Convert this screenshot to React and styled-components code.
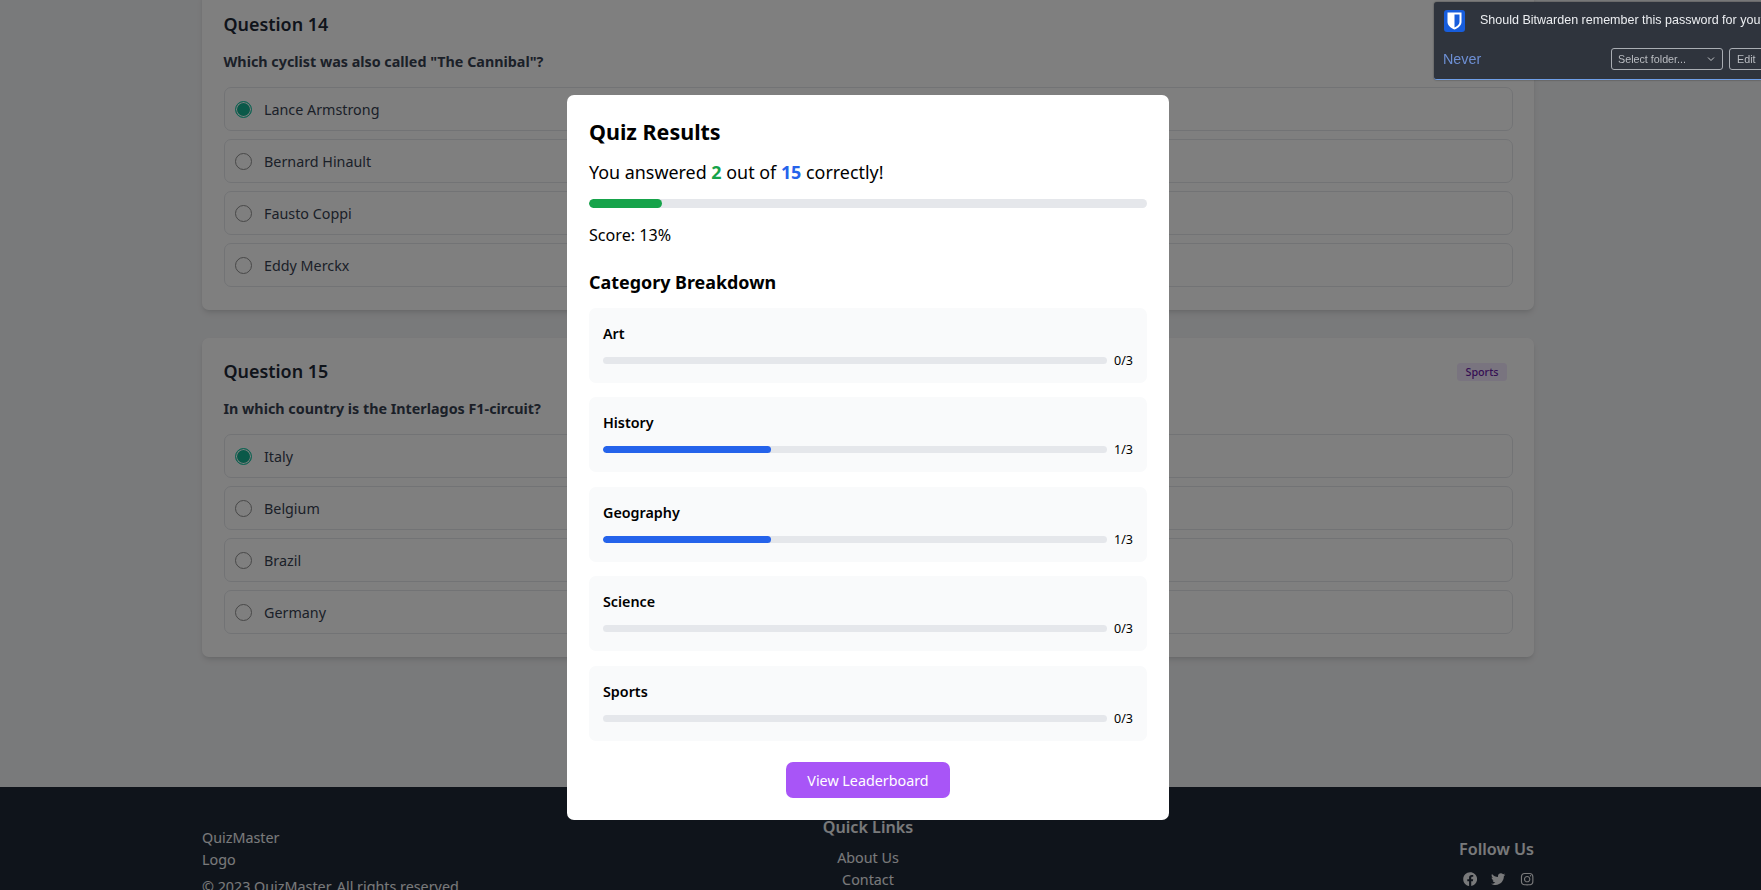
import React from 'react'
import styled, { createGlobalStyle } from 'styled-components'
import { FaFacebook, FaTwitter, FaInstagram } from 'react-icons/fa'

const Global = createGlobalStyle`
  html, body {
    margin: 0;
    height: 890px;
    overflow: hidden;
    background: #f3f4f6;
    font-family: "Noto Sans", sans-serif;
  }
  * { box-sizing: border-box; }
`

const questions = [
  {
    title: 'Question 14',
    text: 'Which cyclist was also called "The Cannibal"?',
    options: ['Lance Armstrong', 'Bernard Hinault', 'Fausto Coppi', 'Eddy Merckx'],
  },
  {
    title: 'Question 15',
    text: 'In which country is the Interlagos F1-circuit?',
    options: ['Italy', 'Belgium', 'Brazil', 'Germany'],
  },
]

const categories = [
  { name: 'Art', score: 0 },
  { name: 'History', score: 1 },
  { name: 'Geography', score: 1 },
  { name: 'Science', score: 0 },
  { name: 'Sports', score: 0 },
]

const Page = styled.div`
  height: 890px;
  overflow: hidden;
  display: flex;
  flex-direction: column;
`

const Main = styled.main`
  height: 796px;
  margin-top: -9px;
  padding: 0 227px 0 202px;
  display: flex;
  flex-direction: column;
  gap: 28px;
  flex-shrink: 0;
`

const Card = styled.section`
  height: 319px;
  background: #fff;
  border-radius: 7px;
  padding: 21.5px 21px 21.5px 21.5px;
  box-shadow: 0 4px 6px -1px rgba(0, 0, 0, 0.1), 0 2px 4px -2px rgba(0, 0, 0, 0.1);
`

const CardHead = styled.div`
  display: flex;
  justify-content: space-between;
  align-items: center;
  height: 23px;
  margin-bottom: 16.5px;
`

const QuestionTitle = styled.h2`
  margin: 0;
  font-size: 17.9px;
  line-height: 23px;
  font-weight: 600;
  color: #1f2937;
`

const Badge = styled.span`
  margin: 1px 6px 0 0;
  height: 18px;
  padding: 0 8.5px;
  border-radius: 3.5px;
  background: #f3e8ff;
  color: #6b21a8;
  font-size: 10.74px;
  line-height: 18px;
  font-weight: 500;
`

const QuestionText = styled.p`
  margin: 0 0 15px;
  font-size: 14.32px;
  line-height: 20px;
  font-weight: 700;
  color: #374151;
`

const Options = styled.div`
  display: flex;
  flex-direction: column;
  gap: 8px;
`

const Option = styled.div`
  height: 44px;
  display: flex;
  align-items: center;
  gap: 12px;
  padding: 0 10.5px;
  border: 1px solid #e5e7eb;
  border-radius: 7px;
  font-size: 14.32px;
  color: #374151;
`

const Radio = styled.span`
  width: 17px;
  height: 17px;
  border-radius: 50%;
  border: 1px solid ${p => (p.$on ? '#1cc9a8' : '#8f8f8f')};
  background: ${p => (p.$on ? '#16b292' : '#fff')};
  box-shadow: ${p => (p.$on ? 'inset 0 0 0 1px #fff' : 'none')};
  flex-shrink: 0;
`

const Footer = styled.footer`
  flex: 1;
  background: #1f2937;
  padding: 0 227px 0 202px;
  display: grid;
  grid-template-columns: 1fr auto 1fr;
  font-size: 14.32px;
  line-height: 22px;
  color: #f3f4f6;
`

const FooterCol = styled.div`
  padding-top: ${p => p.$top}px;
  display: flex;
  flex-direction: column;
  align-items: ${p => p.$align};
  text-align: ${p => p.$text || 'left'};
`

const Copyright = styled.div`
  margin-top: 5px;
  white-space: nowrap;
`

const FooterHead = styled.div`
  font-size: 16.11px;
  font-weight: 600;
  margin-bottom: 9px;
`

const Socials = styled.div`
  display: flex;
  gap: 14px;
  font-size: 14.32px;
  height: 16px;
  align-items: center;
  padding-top: 4px;
`

const Overlay = styled.div`
  position: fixed;
  inset: 0;
  background: rgba(0, 0, 0, 0.5);
  display: flex;
  justify-content: center;
  align-items: flex-start;
  padding: 95px 25px 0 0;
`

const Modal = styled.div`
  width: 602px;
  height: 725px;
  background: #fff;
  border-radius: 7px;
  padding: 22px;
  color: #000;
`

const ModalTitle = styled.h2`
  margin: 0 0 12px;
  font-size: 21.48px;
  line-height: 30px;
  font-weight: 700;
`

const Summary = styled.p`
  margin: 0 0 14px;
  font-size: 17.9px;
  line-height: 26px;
`

const Num = styled.strong`
  font-weight: 700;
  color: ${p => p.$color};
`

const Track = styled.div`
  background: #e5e7eb;
  border-radius: 999px;
  overflow: hidden;
  height: ${p => p.$h}px;
  flex: 1;
`

const Fill = styled.div`
  height: 100%;
  border-radius: 999px;
  background: ${p => p.$color};
`

const Score = styled.p`
  margin: 16px 0 0;
  font-size: 16.11px;
  line-height: 22px;
`

const BreakdownTitle = styled.h3`
  margin: 22.7px 0 13.3px;
  font-size: 17.9px;
  line-height: 26px;
  font-weight: 700;
`

const Tiles = styled.div`
  display: flex;
  flex-direction: column;
  gap: 14.4px;
`

const Tile = styled.div`
  height: 75px;
  background: #f9fafb;
  border-radius: 7px;
  padding: 16px 14px 0;
`

const TileName = styled.div`
  font-size: 14.32px;
  line-height: 20px;
  font-weight: 600;
  margin-bottom: 11.5px;
`

const TileRow = styled.div`
  display: flex;
  align-items: center;
  gap: 7px;
  height: 10px;
  font-size: 12.53px;
`

const TileScore = styled.span`
  width: 19px;
  white-space: nowrap;
`

const ButtonRow = styled.div`
  display: flex;
  justify-content: center;
  margin-top: 21.6px;
`

const LeaderButton = styled.button`
  width: 164px;
  height: 36px;
  border: 0;
  border-radius: 7px;
  background: #a855f7;
  color: #fff;
  font: 14.32px "Noto Sans", sans-serif;
`

const SavePrompt = styled.div`
  position: fixed;
  top: 2px;
  right: 0;
  width: 327px;
  height: 78px;
  background: #2f343d;
  border-radius: 3px 0 0 3px;
  border-bottom: 1.5px solid #6f9fe8;
  font-family: "Liberation Sans", Arial, sans-serif;
  color: #eceef1;
  overflow: hidden;
  padding: 8px 0 0 10px;
  box-shadow: 0 0 2px rgba(0, 0, 0, 0.5);
`

const PromptTop = styled.div`
  display: flex;
  align-items: flex-start;
  gap: 15px;
  white-space: nowrap;
  font-size: 12.53px;
  line-height: 20px;
`

const PromptBottom = styled.div`
  display: flex;
  align-items: center;
  margin: 16px 0 0 -1px;
  height: 22px;
`

const Never = styled.span`
  font-size: 14.32px;
  color: #6d8fd4;
  margin-right: auto;
`

const FolderSelect = styled.div`
  width: 112px;
  height: 22px;
  border: 1px solid #a9adb3;
  border-radius: 3px;
  display: flex;
  align-items: center;
  justify-content: space-between;
  padding: 0 7px 0 6px;
  font-size: 10.74px;
  color: #b9bcc1;
`

const EditButton = styled.div`
  width: 50px;
  height: 22px;
  margin: 0 -18px 0 6px;
  border: 1px solid #a9adb3;
  border-radius: 3px;
  padding-left: 7px;
  font-size: 10.74px;
  line-height: 20px;
  color: #b9bcc1;
`

const BitwardenIcon = () => (
  <svg width="21" height="22" viewBox="0 0 21 22" style={{ flexShrink: 0 }}>
    <rect width="21" height="22" rx="3" fill="#175ddc" />
    <path d="M3.5 2.5h14V12c0 3.500-3.500 6-7 7.500C7 18 3.500 15.500 3.500 12z" fill="#fff" />
    <path d="M10.500 4.500h5V12c0 2.500-2.500 4.300-5 5.500z" fill="#175ddc" />
  </svg>
)

const Chevron = () => (
  <svg width="8" height="6" viewBox="0 0 8 6" fill="none" stroke="#c4c7cb" strokeWidth="1">
    <path d="M1 1.500l3 3 3-3" />
  </svg>
)

const App = () => {
  return (
    <Page>
      <Global />
      <Main>
        {questions.map(q => (
          <Card key={q.title}>
            <CardHead>
              <QuestionTitle>{q.title}</QuestionTitle>
              <Badge>Sports</Badge>
            </CardHead>
            <QuestionText>{q.text}</QuestionText>
            <Options>
              {q.options.map((o, i) => (
                <Option key={o}>
                  <Radio $on={i === 0} />
                  {o}
                </Option>
              ))}
            </Options>
          </Card>
        ))}
      </Main>
      <Footer>
        <FooterCol $top={40} $align="flex-start">
          <div>QuizMaster</div>
          <div>Logo</div>
          <Copyright>© 2023 QuizMaster. All rights reserved.</Copyright>
        </FooterCol>
        <FooterCol $top={29} $align="center" $text="center">
          <FooterHead>Quick Links</FooterHead>
          <div>About Us</div>
          <div>Contact</div>
        </FooterCol>
        <FooterCol $top={51} $align="flex-end">
          <FooterHead>Follow Us</FooterHead>
          <Socials>
            <FaFacebook />
            <FaTwitter />
            <FaInstagram />
          </Socials>
        </FooterCol>
      </Footer>
      <Overlay>
        <Modal>
          <ModalTitle>Quiz Results</ModalTitle>
          <Summary>
            You answered <Num $color="#16a34a">2</Num> out of <Num $color="#2563eb">15</Num> correctly!
          </Summary>
          <Track $h={9}>
            <Fill $color="#16a34a" style={{ width: '13%' }} />
          </Track>
          <Score>Score: 13%</Score>
          <BreakdownTitle>Category Breakdown</BreakdownTitle>
          <Tiles>
            {categories.map(c => (
              <Tile key={c.name}>
                <TileName>{c.name}</TileName>
                <TileRow>
                  <Track $h={7}>
                    <Fill $color="#2563eb" style={{ width: `${(c.score / 3) * 100}%` }} />
                  </Track>
                  <TileScore>{c.score}/3</TileScore>
                </TileRow>
              </Tile>
            ))}
          </Tiles>
          <ButtonRow>
            <LeaderButton>View Leaderboard</LeaderButton>
          </ButtonRow>
        </Modal>
      </Overlay>
      <SavePrompt>
        <PromptTop>
          <BitwardenIcon />
          Should Bitwarden remember this password for you?
        </PromptTop>
        <PromptBottom>
          <Never>Never</Never>
          <FolderSelect>
            Select folder...
            <Chevron />
          </FolderSelect>
          <EditButton>Edit</EditButton>
        </PromptBottom>
      </SavePrompt>
    </Page>
  )
}

export default App
